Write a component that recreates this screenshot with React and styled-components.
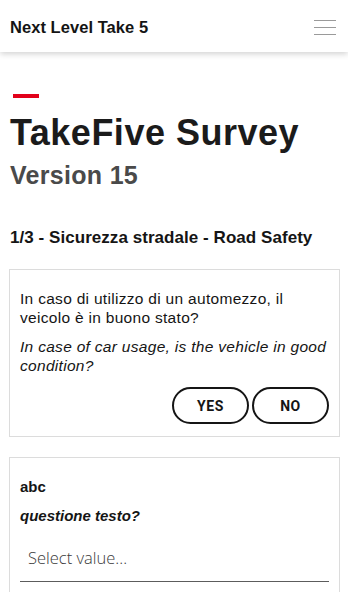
import styled, { createGlobalStyle } from 'styled-components';

const GlobalStyle = createGlobalStyle`
  * {
    box-sizing: border-box;
  }
  body {
    margin: 0;
    background: #ffffff;
    font-family: "Liberation Sans", Arial, sans-serif;
    color: #151515;
  }
`;

const questions = [
  {
    id: 1,
    text: 'In caso di utilizzo di un automezzo, il veicolo è in buono stato?',
    translation: 'In case of car usage, is the vehicle in good condition?',
    type: 'yesno',
  },
  {
    id: 2,
    text: 'abc',
    translation: 'questione testo?',
    type: 'select',
  },
];

const App = () => {
  return (
    <>
      <GlobalStyle />
      <Header>
        <Brand>Next Level Take 5</Brand>
        <MenuButton aria-label="menu">
          <span />
          <span />
          <span />
        </MenuButton>
      </Header>

      <Main>
        <Accent />
        <Title>TakeFive Survey</Title>
        <Version>Version 15</Version>

        <Section>1/3 - Sicurezza stradale - Road Safety</Section>

        <Cards>
          {questions.map((q) => (
            <Card key={q.id}>
              <Question $bold={q.type === 'select'}>{q.text}</Question>
              <Translation $bold={q.type === 'select'}>{q.translation}</Translation>
              {q.type === 'yesno' ? (
                <Answers>
                  <Choice>YES</Choice>
                  <Choice>NO</Choice>
                </Answers>
              ) : (
                <Select>Select value...</Select>
              )}
            </Card>
          ))}
        </Cards>
      </Main>
    </>
  );
};

const Header = styled.header`
  height: 52px;
  display: flex;
  align-items: center;
  justify-content: space-between;
  padding: 0 12px 0 10px;
  background: #ffffff;
  box-shadow: 0 2px 6px rgba(0, 0, 0, 0.18);
`;

const Brand = styled.div`
  font-size: 16.5px;
  font-weight: 700;
  letter-spacing: 0.05px;
  color: #141414;
  margin-top: 2px;
`;

const MenuButton = styled.div`
  width: 22px;
  display: flex;
  flex-direction: column;
  gap: 6px;
  margin-top: 2px;

  span {
    display: block;
    height: 1px;
    background: #9a9a9a;
  }
`;

const Main = styled.main`
  padding: 42px 8px 0 9px;
`;

const Accent = styled.div`
  width: 26px;
  height: 4px;
  margin-left: 4px;
  background: #e2001a;
`;

const Title = styled.h1`
  margin: 13px 0 0 1px;
  font-size: 36px;
  line-height: 43px;
  font-weight: 700;
  letter-spacing: 0.5px;
  color: #1b1b1b;
`;

const Version = styled.h2`
  margin: 6px 0 0 1px;
  font-size: 25px;
  line-height: 30px;
  font-weight: 700;
  letter-spacing: 0.3px;
  color: #4a4a4a;
`;

const Section = styled.h3`
  margin: 38px 0 0 1px;
  font-size: 17px;
  line-height: 20px;
  font-weight: 700;
  letter-spacing: 0.05px;
  color: #151515;
`;

const Cards = styled.div`
  margin-top: 21px;
  display: flex;
  flex-direction: column;
  gap: 20px;
`;

const Card = styled.section`
  border: 1px solid #dcdcdc;
  padding: 19px 10px 12px 10px;
`;

const Question = styled.p`
  margin: 0;
  font-size: ${(p) => (p.$bold ? '15px' : '15.5px')};
  line-height: 19px;
  font-weight: ${(p) => (p.$bold ? 700 : 400)};
  letter-spacing: ${(p) => (p.$bold ? '0' : '0.3px')};
  color: #151515;
`;

const Translation = styled.p`
  margin: 10px 0 0;
  font-size: ${(p) => (p.$bold ? '15px' : '15.5px')};
  line-height: 19px;
  font-style: italic;
  font-weight: ${(p) => (p.$bold ? 700 : 400)};
  letter-spacing: ${(p) => (p.$bold ? '0' : '0.3px')};
  color: #151515;
`;

const Answers = styled.div`
  margin-top: 12px;
  display: flex;
  justify-content: flex-end;
  gap: 3px;
`;

const Choice = styled.button`
  width: 77px;
  height: 37px;
  border: 2px solid #151515;
  border-radius: 19px;
  background: #ffffff;
  font-family: Roboto, "Liberation Sans", sans-serif;
  font-size: 14px;
  font-weight: 700;
  letter-spacing: 0.6px;
  color: #151515;
  padding: 0;
`;

const Select = styled.div`
  margin-top: 20px;
  height: 37px;
  padding: 0 8px;
  line-height: 26px;
  border-bottom: 1px solid #5c5c5c;
  font-family: "Open Sans", sans-serif;
  font-weight: 300;
  font-size: 16.5px;
  color: #3a3a3a;
`;

export default App;
